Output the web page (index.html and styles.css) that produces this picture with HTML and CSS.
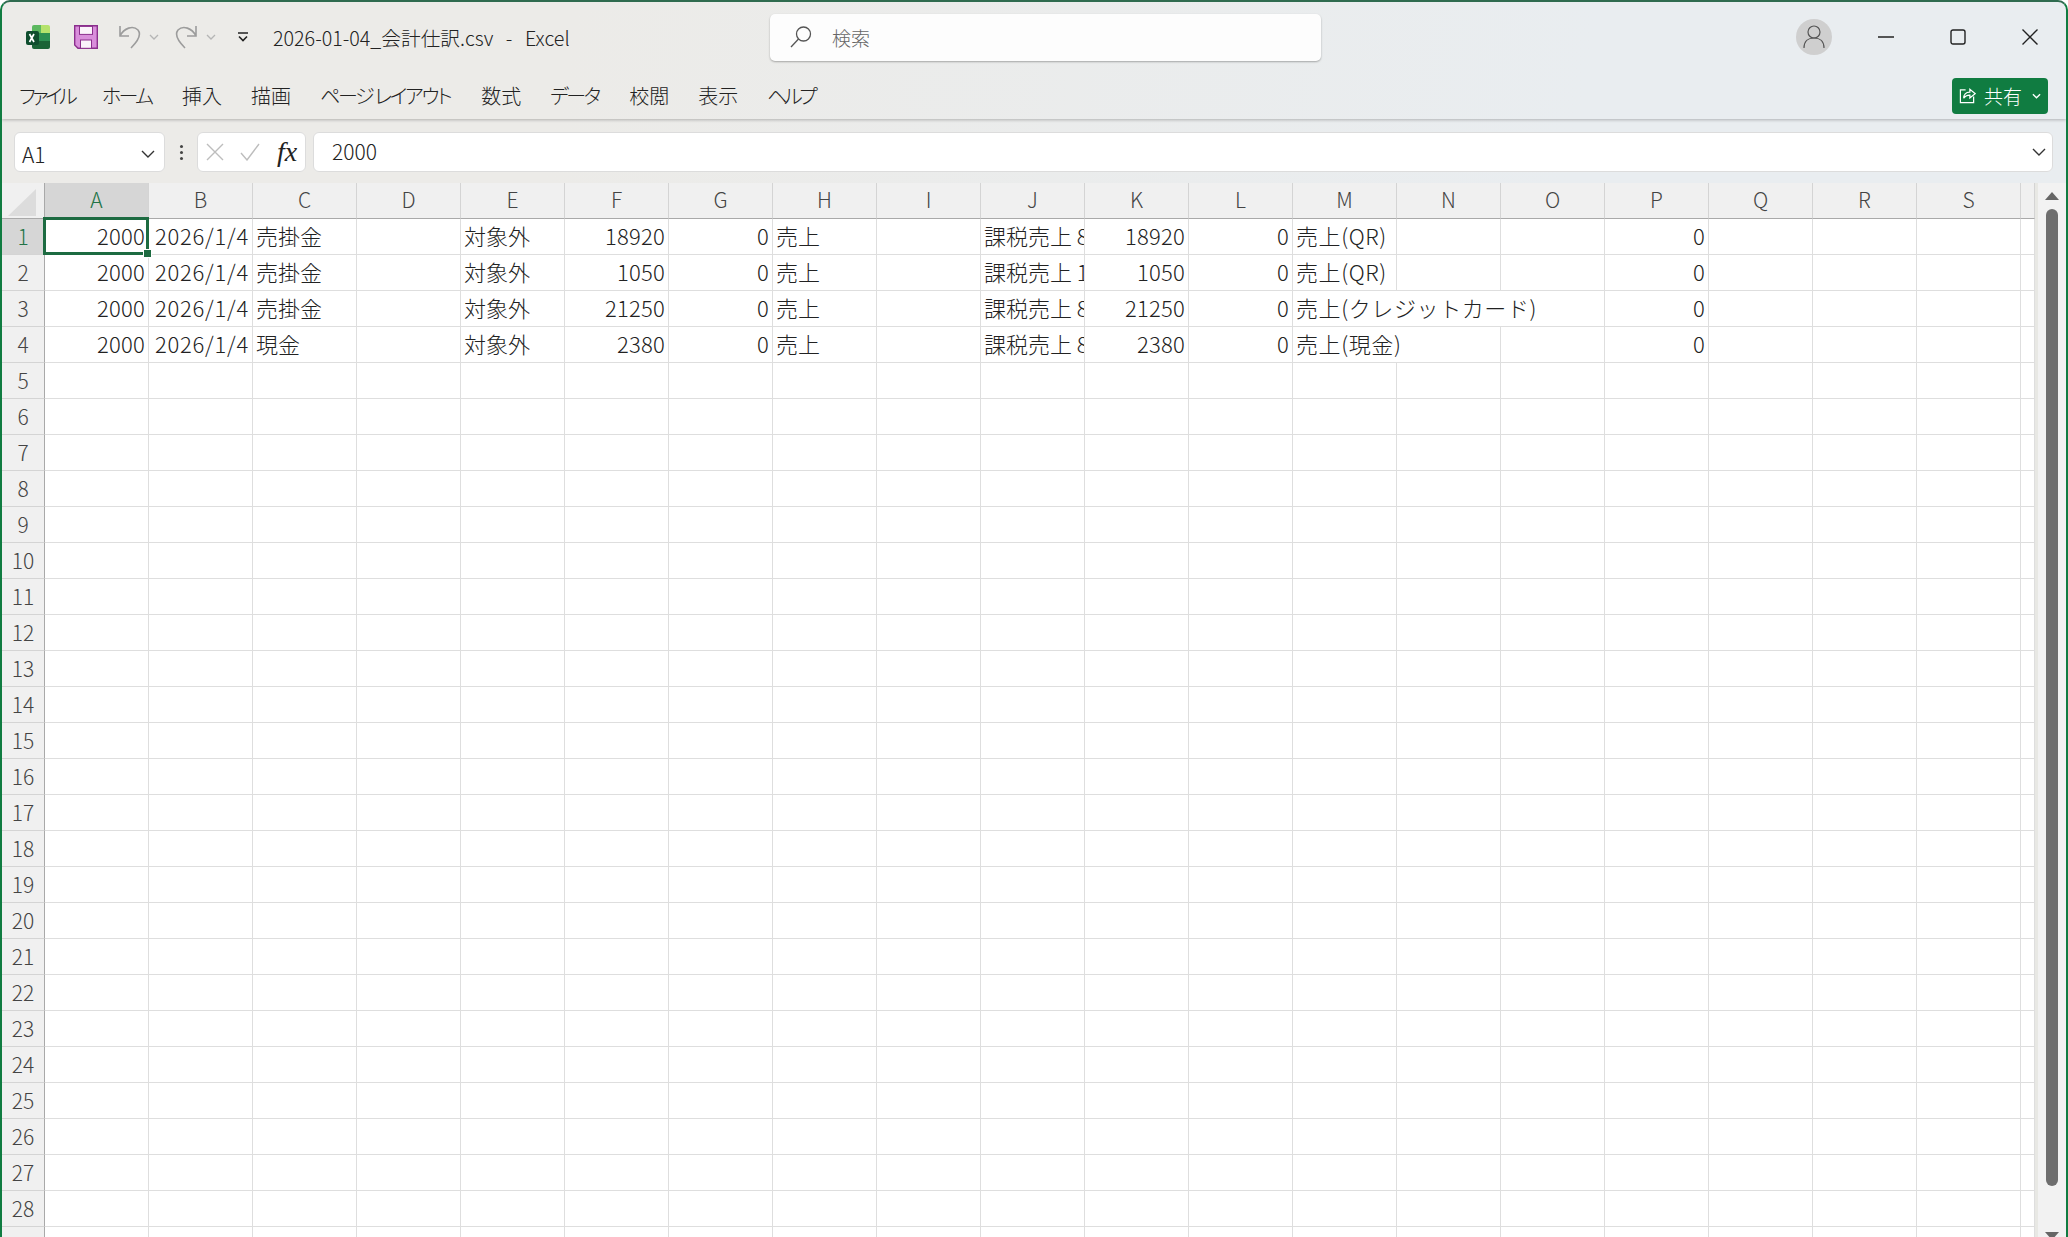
FILE: index.html
```html
<!DOCTYPE html>
<html lang="ja">
<head>
  <meta charset="UTF-8">
  <title>2026-01-04_会計仕訳.csv - Excel</title>
  <link rel="stylesheet" href="styles.css">
</head>
<body>
  <div class="window">
    <header class="chrome">
      <div class="titlebar">
        <svg class="app-icon" viewBox="0 0 24 24">
          <path d="M8 0h7v8H6V2a2 2 0 0 1 2-2z" fill="#5cb85f"/>
          <path d="M15 0h7a2 2 0 0 1 2 2v6h-9z" fill="#b5e26c"/>
          <path d="M6 8h18v8H6z" fill="#2c8f52"/>
          <path d="M6 16h18v6a2 2 0 0 1-2 2H8a2 2 0 0 1-2-2z" fill="#1a6336"/>
          <path d="M2 6h9a2 2 0 0 1 2 2v10a2 2 0 0 1-2 2H2a2 2 0 0 1-2-2V8a2 2 0 0 1 2-2z" fill="#0e4d2d"/>
          <path d="M3.500 9l4.500 8M8 9l-4.500 8" stroke="#fff" stroke-width="1.700" fill="none"/>
        </svg>
        <svg class="save-icon" viewBox="0 0 24 24">
          <path d="M.7.7h22.600v22.600H4L.7 20z" fill="#d98edb" stroke="#8b2f8d" stroke-width="1.400"/>
          <rect x="5.500" y="1.400" width="13" height="8" fill="#fbf3fb" stroke="#8b2f8d" stroke-width="1"/>
          <rect x="6.500" y="15" width="11" height="8.300" fill="#fbf3fb" stroke="#8b2f8d" stroke-width="1"/>
        </svg>
        <svg class="undo-icon" viewBox="0 0 24 24">
          <path d="M2 1v10h9M2 11C6 3 15 0 20 5c4 5 0 11-7 18" fill="none" stroke="#9c9c9c" stroke-width="1.600"/>
        </svg>
        <svg class="mini-chevron" viewBox="0 0 10 6"><path d="M1 1l4 4 4-4" fill="none" stroke="#b5b5b5" stroke-width="1.300"/></svg>
        <svg class="redo-icon" viewBox="0 0 24 24">
          <path d="M22 1v10h-9M22 11C18 3 9 0 4 5c-4 5 0 11 7 18" fill="none" stroke="#9c9c9c" stroke-width="1.600"/>
        </svg>
        <svg class="mini-chevron second" viewBox="0 0 10 6"><path d="M1 1l4 4 4-4" fill="none" stroke="#b5b5b5" stroke-width="1.300"/></svg>
        <svg class="qat-more" viewBox="0 0 12 10"><path d="M1 1h10" stroke="#222" stroke-width="1.500"/><path d="M2 4.500l4 4 4-4" fill="none" stroke="#222" stroke-width="1.600"/></svg>
        <div class="doc-title">2026-01-04_会計仕訳.csv<span class="sep">-</span>Excel</div>
        <div class="search">
          <svg viewBox="0 0 22 22"><circle cx="13.500" cy="8" r="7" fill="none" stroke="#555" stroke-width="1.300"/><path d="M8.500 13L1 21" stroke="#555" stroke-width="1.300"/></svg>
          <span>検索</span>
        </div>
        <div class="avatar">
          <svg viewBox="0 0 36 36"><circle cx="18" cy="13" r="6" fill="none" stroke="#555" stroke-width="1.200"/><path d="M8 29c0-7 4-10 10-10s10 3 10 10" fill="none" stroke="#555" stroke-width="1.200"/></svg>
        </div>
        <div class="win-btns">
          <svg viewBox="0 0 16 16"><path d="M0 8h16" stroke="#222" stroke-width="1.400"/></svg>
          <svg viewBox="0 0 16 16"><rect x="1" y="1" width="14" height="14" rx="2" fill="none" stroke="#222" stroke-width="1.400"/></svg>
          <svg viewBox="0 0 16 16"><path d="M.5.500l15 15M15.500.500l-15 15" stroke="#222" stroke-width="1.400"/></svg>
        </div>
      </div>
      <div class="menubar">
        <nav class="menu">
          <span class="kana-tight">ファイル</span>
          <span class="kana">ホーム</span>
          <span>挿入</span>
          <span>描画</span>
          <span class="kana-long">ページ レイアウト</span>
          <span>数式</span>
          <span class="kana">データ</span>
          <span>校閲</span>
          <span>表示</span>
          <span class="kana-tight">ヘルプ</span>
        </nav>
        <button class="share">
          <svg viewBox="0 0 18 18"><path d="M7 3H1.500v13.500h14V10" fill="none" stroke="#fff" stroke-width="1.300"/><path d="M5 12c0-4 2-6.500 6.500-6.500V2.500L17 7l-5.500 4.500V8.500C8 8.500 6 10 5 12z" fill="none" stroke="#fff" stroke-width="1.300"/></svg>
          <span>共有</span>
          <svg class="share-chevron" viewBox="0 0 10 6"><path d="M1 1l4 4 4-4" fill="none" stroke="#fff" stroke-width="1.500"/></svg>
        </button>
      </div>
    </header>

    <div class="formula-bar">
      <div class="name-box">
        <span>A1</span>
        <svg viewBox="0 0 14 8"><path d="M1 1l6 6 6-6" fill="none" stroke="#333" stroke-width="1.400"/></svg>
      </div>
      <div class="dots"><i></i><i></i><i></i></div>
      <div class="fx-box">
        <svg viewBox="0 0 18 18"><path d="M1 1l16 16M17 1L1 17" stroke="#bdbdbd" stroke-width="1.400"/></svg>
        <svg viewBox="0 0 20 18"><path d="M1 10l6 7L19 1" fill="none" stroke="#bdbdbd" stroke-width="1.400"/></svg>
        <em>fx</em>
      </div>
      <div class="formula-input">
        <span>2000</span>
        <svg viewBox="0 0 14 8"><path d="M1 1l6 6 6-6" fill="none" stroke="#333" stroke-width="1.400"/></svg>
      </div>
    </div>

    <div class="sheet-area">
      <div class="sheet" id="sheet"></div>
      <div class="scrollbar">
        <div class="arrow-up"></div>
        <div class="thumb"></div>
        <div class="arrow-down"></div>
      </div>
    </div>
  </div>
  <script src="grid.js"></script>
</body>
</html>
```
FILE: styles.css
```css
* {
  box-sizing: border-box;
}
html, body {
  margin: 0;
  height: 100%;
  overflow: hidden;
  background: #fff;
}
body {
  font-family: "Noto Sans CJK JP", "Noto Sans", sans-serif;
  font-weight: 300;
  color: #222;
}
svg {
  display: block;
  flex: none;
}
.window {
  height: 1260px;
  border: 2px solid #107c41;
  border-top-color: #2f6b4f;
  border-bottom: none;
  border-radius: 10px 10px 0 0;
  overflow: hidden;
  display: flex;
  flex-direction: column;
  background: linear-gradient(100deg, #ecebe8 0%, #ecebe8 25%, #e9edf0 70%, #e9edf0 100%);
}
.chrome {
  height: 117px;
  flex: none;
  box-shadow: 0 1px 3px rgba(0,0,0,0.25);
}

/* title bar */
.titlebar {
  height: 70px;
  display: flex;
  align-items: center;
  padding-left: 24px;
}
.app-icon {
  width: 24px;
  height: 24px;
}
.save-icon {
  width: 24px;
  height: 24px;
  margin-left: 24px;
}
.undo-icon {
  width: 24px;
  height: 24px;
  margin-left: 20px;
}
.redo-icon {
  width: 24px;
  height: 24px;
  margin-left: 15px;
}
.mini-chevron {
  width: 10px;
  height: 6px;
  margin-left: 7px;
}
.mini-chevron.second {
  margin-left: 8px;
}
.qat-more {
  width: 12px;
  height: 10px;
  margin-left: 21px;
}
.doc-title {
  width: 497px;
  margin-left: 24px;
  font-size: 19.700px;
  white-space: nowrap;
  font-feature-settings: "palt";
}
.sep {
  margin: 0 12.500px;
}
.search {
  width: 551px;
  height: 47px;
  display: flex;
  align-items: center;
  gap: 20px;
  padding-left: 20px;
  background: #fdfdfd;
  border-radius: 5px;
  box-shadow: 0 1px 2px rgba(0,0,0,0.3);
  font-size: 19px;
  color: #666;
}
.search svg {
  width: 22px;
  height: 22px;
}
.avatar {
  width: 36px;
  height: 36px;
  margin-left: 475px;
  border-radius: 50%;
  background: #cfcfcf;
}
.win-btns {
  display: flex;
  gap: 56px;
  margin-left: 46px;
}
.win-btns svg {
  width: 16px;
  height: 16px;
}

/* menu row */
.menubar {
  height: 47px;
  display: flex;
  align-items: center;
  justify-content: space-between;
  padding: 0 18px 0 17px;
}
.menu {
  display: flex;
  gap: 29px;
  font-size: 20px;
  font-feature-settings: "palt";
}
/* kana in the ribbon tabs are much tighter than in the fallback font */
.kana {
  letter-spacing: -2.500px;
  padding-right: 1.500px;
}
.kana-tight {
  letter-spacing: -3.500px;
  margin-right: -1.500px;
}
.kana-long {
  letter-spacing: -2.300px;
  padding-right: 2px;
}
.share {
  width: 96px;
  height: 36px;
  display: flex;
  align-items: center;
  padding: 0 0 0 7px;
  border: none;
  border-radius: 4px;
  background: #107c41;
  color: #fff;
  font: inherit;
  font-size: 19px;
}
.share svg {
  width: 17px;
  height: 17px;
}
.share span {
  margin-left: 8px;
}
.share .share-chevron {
  width: 9px;
  height: 6px;
  margin-left: 10px;
}

/* formula bar */
.formula-bar {
  height: 64px;
  flex: none;
  display: flex;
  align-items: flex-start;
  padding: 13px 13px 0 12px;
}
.name-box, .fx-box, .formula-input {
  height: 40px;
  background: #fff;
  border: 1px solid #dcdcdc;
  border-radius: 6px;
  display: flex;
  align-items: center;
}
.name-box {
  width: 151px;
  padding: 3px 9px 0 7px;
  justify-content: space-between;
  font-size: 21px;
}
.name-box svg, .formula-input svg {
  width: 14px;
  height: 8px;
}
.dots {
  width: 32px;
  height: 40px;
  display: flex;
  flex-direction: column;
  align-items: center;
  justify-content: center;
  gap: 3px;
}
.dots i {
  width: 3px;
  height: 3px;
  background: #444;
  border-radius: 50%;
}
.fx-box {
  width: 109px;
  padding-left: 8px;
}
.fx-box svg {
  width: 18px;
  height: 18px;
}
.fx-box svg + svg {
  width: 20px;
  margin-left: 16px;
}
.fx-box em {
  margin-left: 17px;
  font-family: "Liberation Serif", serif;
  font-size: 28px;
  font-weight: 400;
  line-height: 1;
}
.formula-input {
  flex: 1;
  margin-left: 7px;
  padding: 0 6px 0 18px;
  justify-content: space-between;
  font-size: 21px;
}
.formula-input span {
  padding-bottom: 3px;
}

/* grid */
.sheet-area {
  flex: 1;
  display: flex;
  min-height: 0;
}
.sheet {
  width: 2033px;
  display: grid;
  grid-template-columns: 43px repeat(19, 104px) 14px;
  grid-auto-rows: 36px;
  align-content: start;
  overflow: hidden;
  background: #fff;
  font-size: 22px;
}
.corner, .col-head, .row-head {
  background: #f0f0f0;
  display: flex;
  align-items: center;
  justify-content: center;
  color: #444;
  font-size: 21px;
  padding-bottom: 2px;
}
.col-head {
  height: 36px;
  padding-bottom: 3px;
  border-right: 1px solid #d4d4d4;
  border-bottom: 1px solid #a9a9a9;
}
.row-head {
  border-right: 1px solid #a9a9a9;
  border-bottom: 1px solid #d4d4d4;
}
.corner {
  padding-bottom: 0;
  border-right: 1px solid #a9a9a9;
  border-bottom: 1px solid #a9a9a9;
}
.corner::before {
  content: "";
  width: 0;
  height: 0;
  margin: 3px 0 0 -2px;
  border-style: solid;
  border-width: 0 0 27px 28px;
  border-color: transparent transparent #dcdcdc transparent;
}
.active-head {
  background: #d6d6d6;
  color: #217346;
}
.cell {
  position: relative;
  padding: 0 3px;
  border-right: 1px solid #dedede;
  border-bottom: 1px solid #dedede;
  white-space: nowrap;
  overflow: hidden;
  line-height: 32px;
}
.num {
  text-align: right;
  letter-spacing: 0.25px;
}
.date {
  letter-spacing: 0.75px;
}
.memo {
  letter-spacing: 0.6px;
}
.span-2 {
  grid-column: span 2;
}
.span-3 {
  grid-column: span 3;
}
.selected {
  overflow: visible;
  z-index: 2;
}
/* selection frame over the cell */
.selected::before {
  content: "";
  position: absolute;
  top: -2px;
  left: -2px;
  right: -1px;
  bottom: -1px;
  border: 3px solid #1d6b41;
}
/* fill handle */
.selected::after {
  content: "";
  position: absolute;
  right: -4px;
  bottom: -4px;
  width: 7px;
  height: 7px;
  background: #1d6b41;
  border: 1px solid #fff;
}

/* scrollbar */
.scrollbar {
  flex: 1;
  display: flex;
  flex-direction: column;
  align-items: center;
  background: #f2f2f2;
  border-left: 3px solid #e8e8e4;
  padding: 9px 0 0;
}
.arrow-up {
  width: 0;
  height: 0;
  border-style: solid;
  border-width: 0 7px 8px;
  border-color: transparent transparent #666;
}
.thumb {
  width: 12px;
  height: 977px;
  margin-top: 9px;
  background: #6e6e6e;
  border-radius: 6px;
}
.arrow-down {
  width: 0;
  height: 0;
  margin-top: 46px;
  border-style: solid;
  border-width: 8px 7px 0;
  border-color: #666 transparent transparent;
}
```
FILE: grid.js
```js
// A..S plus the partly visible column T
const cols = 'ABCDEFGHIJKLMNOPQRST'.split('');
const rowCount = 29;

const data = [
  ['2000', '2026/1/4', '売掛金', '', '対象外', '18920', '0', '売上', '', '課税売上 8%', '18920', '0', '売上(QR)', '', '', '0'],
  ['2000', '2026/1/4', '売掛金', '', '対象外', '1050', '0', '売上', '', '課税売上 10%', '1050', '0', '売上(QR)', '', '', '0'],
  ['2000', '2026/1/4', '売掛金', '', '対象外', '21250', '0', '売上', '', '課税売上 8%', '21250', '0', '売上(クレジットカード)', '', '', '0'],
  ['2000', '2026/1/4', '現金', '', '対象外', '2380', '0', '売上', '', '課税売上 8%', '2380', '0', '売上(現金)', '', '', '0']
];

// long texts run on over the empty cells beside them
const spans = { '売上(クレジットカード)': 3, '売上(現金)': 2 };

const sheet = document.getElementById('sheet');

function addCell(className, text) {
  const el = document.createElement('div');
  el.className = className;
  el.textContent = text;
  sheet.appendChild(el);
  return el;
}

addCell('corner', '');
cols.forEach((c, i) => {
  addCell(i === 0 ? 'col-head active-head' : 'col-head', i < 19 ? c : '');
});

for (let r = 0; r < rowCount; r++) {
  addCell(r === 0 ? 'row-head active-head' : 'row-head', r + 1);
  const row = data[r] || [];
  for (let c = 0; c < cols.length; c++) {
    const text = row[c] || '';
    let cls = 'cell';
    if (/^[\d/]+$/.test(text)) cls += ' num';
    if (text.includes('/')) cls += ' date';
    if (text.startsWith('売上(')) cls += ' memo';
    if (r === 0 && c === 0) cls += ' selected';
    if (spans[text]) {
      addCell(cls + ' span-' + spans[text], text);
      c += spans[text] - 1;
      continue;
    }
    addCell(cls, text);
  }
}
```
